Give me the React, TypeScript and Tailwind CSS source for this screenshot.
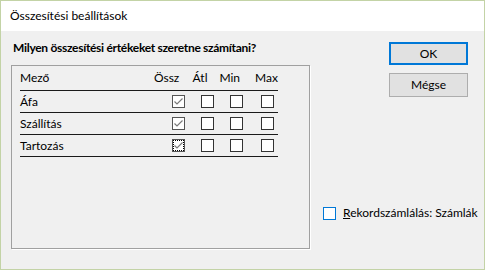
import React from "react";

function Box({ checked, focus, blue }: { checked?: boolean; focus?: boolean; blue?: boolean }) {
  return (
    <div
      className={
        "relative w-[13px] h-[13px] p-[1px] shrink-0 " +
        (blue ? "bg-[#0078d7]" : checked ? "bg-[#555555]" : "bg-[#333333]")
      }
    >
      <div className="w-full h-full bg-white relative">
        {focus && <div className="absolute inset-0 border border-dotted border-black" />}
        {checked && (
          <svg className="absolute inset-0" width="11" height="11" viewBox="0 0 11 11">
            <path d="M1.5 5.5 L4 8 L9.5 2.5" fill="none" stroke="#7a7a7a" strokeWidth="1.2" />
          </svg>
        )}
      </div>
    </div>
  );
}

const rows = [
  { name: "Áfa", focus: false },
  { name: "Szállítás", focus: false },
  { name: "Tartozás", focus: true },
];

export default function App() {
  return (
    <div
      className="w-[485px] h-[270px] border border-[#c3d3a6] bg-[#f0f0f0] text-[12px] text-black flex flex-col"
      style={{ fontFamily: 'Lato, "Segoe UI", sans-serif' }}
    >
      <div className="h-[30px] bg-white flex items-center pl-[9px] shrink-0">Összesítési beállítások</div>

      <div className="flex flex-1">
        <div className="ml-[10px] w-[299px]">
          <div className="h-[34px] flex items-center pl-[2px] font-bold whitespace-nowrap tracking-[-0.3px]">
            Milyen összesítési értékeket szeretne számítani?
          </div>
          <div className="h-[184px] border border-[#a0a0a0] shadow-[1px_1px_0_#fff] pl-[8px]">
            <div className="w-[258px]">
              <div className="h-[25px] flex items-center border-b border-[#1a1a1a]">
                <div className="w-[135px]">Mező</div>
                <div className="w-[39px]">Össz</div>
                <div className="w-[27px]">Átl</div>
                <div className="w-[36px]">Min</div>
                <div>Max</div>
              </div>
              {rows.map((r, i) => (
                <div key={i} className="h-[22px] flex items-center border-b border-[#1a1a1a]">
                  <div className="w-[152px]">{r.name}</div>
                  <Box checked focus={r.focus} />
                  <div className="ml-[16px]"><Box /></div>
                  <div className="ml-[16px]"><Box /></div>
                  <div className="ml-[18px]"><Box /></div>
                </div>
              ))}
            </div>
          </div>
        </div>

        <div className="flex-1 flex flex-col">
          <div className="ml-[79px] mt-[11px] flex flex-col gap-[8px]">
            <button className="w-[79px] h-[23px] bg-[#e1e1e1] border-2 border-[#0078d7] flex items-center justify-center">
              OK
            </button>
            <button className="w-[79px] h-[24px] bg-[#e1e1e1] border border-[#adadad] flex items-center justify-center">
              Mégse
            </button>
          </div>
          <div className="ml-[13px] mt-[107px] flex items-center gap-[7px] whitespace-nowrap">
            <Box blue />
            <span>
              <span className="underline">R</span>ekordszámlálás: Számlák
            </span>
          </div>
        </div>
      </div>
    </div>
  );
}
